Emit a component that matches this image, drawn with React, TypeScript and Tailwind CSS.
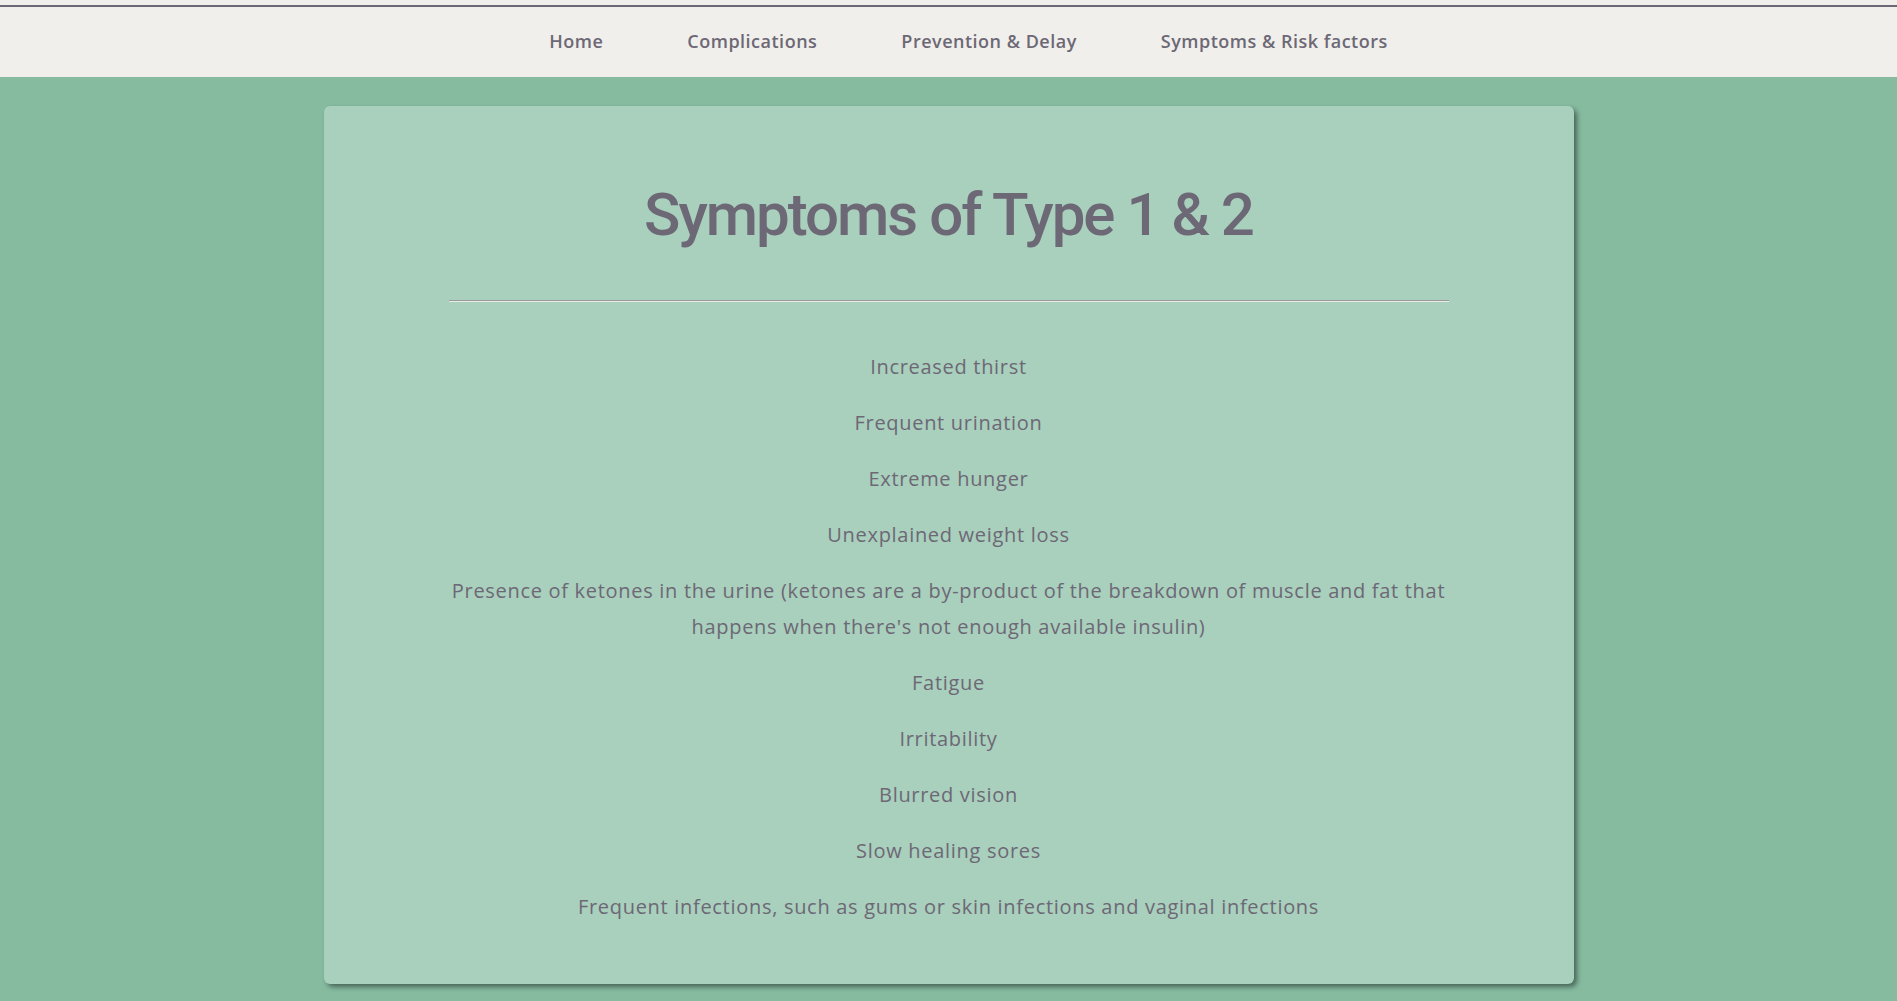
import React from "react";

const items: string[][] = [
  ["Increased thirst"],
  ["Frequent urination"],
  ["Extreme hunger"],
  ["Unexplained weight loss"],
  [
    "Presence of ketones in the urine (ketones are a by-product of the breakdown of muscle and fat that",
    "happens when there's not enough available insulin)",
  ],
  ["Fatigue"],
  ["Irritability"],
  ["Blurred vision"],
  ["Slow healing sores"],
  ["Frequent infections, such as gums or skin infections and vaginal infections"],
];

const navLinks = ["Home", "Complications", "Prevention & Delay", "Symptoms & Risk factors"];

export default function App() {
  return (
    <div className="min-h-screen bg-[#86bba0] font-['Open_Sans',sans-serif]">
      <header className="bg-[#f0efeb]">
        <div className="h-[5px]" />
        <div className="h-[2px] bg-[#6d6875]" />
        <nav className="h-[70px] flex items-center justify-center pl-10">
          <ul className="flex items-center gap-[84px] -mt-[2px]">
            {navLinks.map((l) => (
              <li key={l}>
                <a className="text-[18px] font-semibold text-[#6d6875] tracking-[0.5px]">{l}</a>
              </li>
            ))}
          </ul>
        </nav>
      </header>
      <main className="flex justify-center pt-[29px] pb-[18px]">
        <div className="w-[1250px] bg-[#a9cfbd] rounded-[6px] shadow-[3px_3px_5px_rgba(0,0,0,0.45)] flex flex-col items-center pt-[73px] pb-[59px]">
          <h1 className="font-['Roboto',sans-serif] text-[60px] leading-[72px] font-medium text-[#6d6875] tracking-[-2px]">
            Symptoms of Type 1 &amp; 2
          </h1>
          <hr className="w-[1000px] mt-[49px] border-0 border-t border-b border-t-[#9a9a9a] border-b-[#e8ece9]" />
          <div className="w-[1000px] mt-[47px] flex flex-col gap-[20px] text-center">
            {items.map((lines, i) => (
              <p key={i} className="text-[20px] leading-[36px] text-[#6d6875] tracking-[0.7px]">
                {lines.map((ln, j) => (
                  <React.Fragment key={j}>
                    {ln}
                    {j < lines.length - 1 && <br />}
                  </React.Fragment>
                ))}
              </p>
            ))}
          </div>
        </div>
      </main>
    </div>
  );
}
